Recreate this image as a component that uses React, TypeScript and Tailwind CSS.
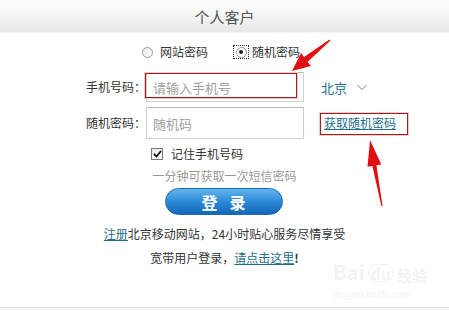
import React from "react";

const font = { fontFamily: '"Noto Sans CJK SC", "Liberation Sans", sans-serif' };

export default function App() {
  return (
    <div
      className="relative w-[449px] h-[311px] bg-white overflow-hidden flex flex-col text-[12px] text-[#333]"
      style={font}
    >
      {/* header */}
      <div className="h-[33px] shrink-0 flex items-center justify-center bg-gradient-to-b from-[#fefefe] via-[#f6f6f6] to-[#e7e7e7] border-b border-[#f4f4f4]">
        <span className="text-[15px] text-[#555] leading-none">个人客户</span>
      </div>

      {/* radio row */}
      <div className="mt-[11px] h-[16px] flex items-center pl-[142px] leading-none">
        <span className="w-[11px] h-[11px] rounded-full border border-[#9a9a9a] bg-gradient-to-br from-[#e9e9e9] to-white" />
        <span className="ml-[7px]">网站密码</span>
        <span className="ml-[25px] w-[16px] h-[14px] border border-dotted border-[#333] flex items-center justify-center">
          <span className="w-[11px] h-[11px] rounded-full border border-[#9a9a9a] bg-white flex items-center justify-center">
            <span className="w-[4px] h-[4px] rounded-full bg-[#222]" />
          </span>
        </span>
        <span className="ml-[3px]">随机密码</span>
      </div>

      {/* phone row */}
      <div className="mt-[12px] h-[30px] flex items-center">
        <span className="w-[146px] text-right leading-none">手机号码：</span>
        <div className="w-[158px] h-[30px] border border-[#cfcfcf] border-t-[#b9b9b9] flex items-center pl-[6px] text-[13px] text-[#a0a0a0] leading-none">
          请输入手机号
        </div>
        <span className="ml-[17px] text-[13px] text-[#1d6e88] leading-none flex items-center">
          北京
          <svg width="10" height="7" viewBox="0 0 10 7" className="ml-[10px] mt-[1px]">
            <path d="M0.5 1 L5 5.5 L9.5 1" fill="none" stroke="#5a8fa3" strokeWidth="1" />
          </svg>
        </span>
      </div>

      {/* code row */}
      <div className="mt-[5px] h-[32px] flex items-center">
        <span className="w-[146px] text-right leading-none">随机密码：</span>
        <div className="w-[158px] h-[32px] border border-[#cfcfcf] border-t-[#b9b9b9] flex items-center pl-[6px] text-[13px] text-[#a0a0a0] leading-none">
          随机码
        </div>
        <span className="ml-[20px] text-[#1d6e88] underline leading-none">获取随机密码</span>
      </div>

      {/* remember */}
      <div className="mt-[8px] h-[14px] flex items-center pl-[151px] leading-none">
        <span className="w-[12px] h-[12px] border border-[#777] bg-gradient-to-br from-[#e6e6e6] to-white flex items-center justify-center">
          <svg width="9" height="8" viewBox="0 0 9 8">
            <path d="M1 4 L3.5 6.5 L8 1" fill="none" stroke="#111" strokeWidth="1.8" />
          </svg>
        </span>
        <span className="ml-[8px]">记住手机号码</span>
      </div>

      {/* hint */}
      <div className="mt-[7px] h-[16px] flex items-center justify-center text-[#999] leading-none">
        一分钟可获取一次短信密码
      </div>

      {/* login button */}
      <div className="mt-[4px] flex justify-center">
        <div className="ml-[-2px] w-[118px] h-[27px] rounded-full border border-[#1c6cb3] bg-gradient-to-b from-[#62b6ec] via-[#2b8ad7] to-[#1467b6] flex items-center justify-center gap-[12px] text-white text-[16px] font-bold leading-none">
          <span>登</span>
          <span>录</span>
        </div>
      </div>

      {/* links */}
      <div className="mt-[11px] h-[16px] flex items-center justify-center leading-none">
        <span className="text-[#1d6e88] underline">注册</span>
        <span>北京移动网站，24小时贴心服务尽情享受</span>
      </div>
      <div className="mt-[8px] h-[16px] flex items-center justify-center leading-none">
        <span>宽带用户登录，</span>
        <span className="text-[#1d6e88] underline">请点击这里</span>
        <span className="font-bold">!</span>
      </div>

      <div className="mt-auto h-[1px] bg-[#dcdcdc]" />
      <div className="h-[3px] bg-[#f7f7f7]" />

      {/* watermark */}
      <div className="absolute left-[333px] top-[262px] flex items-end gap-[3px] text-[#f3f3f3] leading-none select-none">
        <span className="text-[20px] font-bold">Bai</span>
        <span className="text-[16px] font-bold border border-[#f3f3f3] rounded-full px-[2px]">du</span>
        <span className="text-[15px] font-bold">经验</span>
      </div>
      <div className="absolute left-[333px] top-[289px] text-[9px] text-[#f3f3f3] leading-none">
        jingyan.baidu.com
      </div>

      {/* annotation boxes */}
      <div className="absolute left-[145px] top-[73px] w-[152px] h-[25px] border border-[#a11d1d] shadow-[0_0_0_1px_#f4caca]" />
      <div className="absolute left-[320px] top-[113px] w-[88px] h-[22px] border border-[#a11d1d] shadow-[0_0_0_1px_#f4caca]" />

      {/* arrows */}
      <svg className="absolute left-0 top-0" width="449" height="311" viewBox="0 0 449 311">
        <polygon
          points="292,71 311,66 307.5,62 330.5,40.5 329.5,39.5 304,57 301,53"
          fill="#e01010"
        />
        <polygon
          points="370,140 381.3,164.4 376.4,165.3 382.6,206 381.4,206.2 372.4,166 367.5,166.8"
          fill="#e01010"
        />
      </svg>
    </div>
  );
}
